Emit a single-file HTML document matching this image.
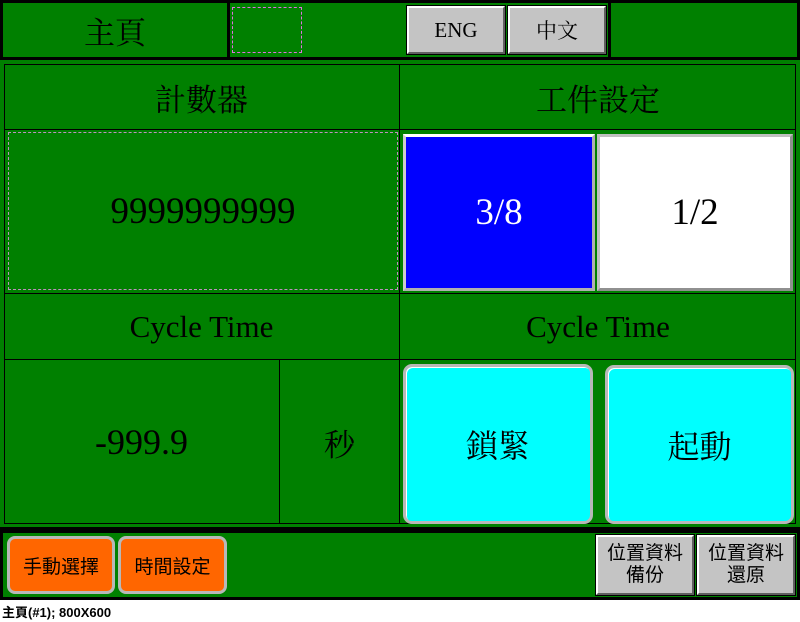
<!DOCTYPE html><html><head><style>
*{margin:0;padding:0;box-sizing:border-box}
body{width:800px;height:622px;background:#fff;position:relative;overflow:hidden;font-family:"Liberation Serif","Noto Serif CJK SC",serif}
.a{position:absolute}
.g{background:#008000}
.c{display:flex;align-items:center;justify-content:center;color:#000}
.gb{background:#c4c4c4;border:2px solid;border-color:#fff #606060 #606060 #fff;outline:1px solid #000}
.cy{background:#0ff;border:3px solid #b8b8b8;border-radius:9px;box-shadow:inset 1px 1px 0 #fff}
.or{background:#f60;border:3px solid #b8b8b8;border-radius:8px;font-family:"Liberation Sans","Noto Sans CJK SC",sans-serif;font-size:19px}
.ln{background:#000}
</style></head><body>
<div class="a" style="left:0;top:0;width:800px;height:600px;background:#000"></div>
<div class="a g c" style="left:3px;top:3px;width:224px;height:54px;font-size:31px">主頁</div>
<div class="a g" style="left:230px;top:3px;width:378px;height:54px"></div>
<div class="a" style="left:232px;top:7px;width:70px;height:46px;border:1px dashed #e070e0"></div>
<div class="a gb c" style="left:407px;top:6px;width:98px;height:48px;font-size:21px">ENG</div>
<div class="a gb c" style="left:508px;top:6px;width:98px;height:48px;font-size:21px">中文</div>
<div class="a g" style="left:611px;top:3px;width:186px;height:54px"></div>
<div class="a g" style="left:0;top:60px;width:800px;height:467px"></div>
<div class="a" style="left:4px;top:64px;width:792px;height:460px;border:1px solid #000"></div>
<div class="a ln" style="left:399px;top:64px;width:1px;height:460px"></div>
<div class="a ln" style="left:4px;top:129px;width:792px;height:1px"></div>
<div class="a ln" style="left:4px;top:293px;width:792px;height:1px"></div>
<div class="a ln" style="left:4px;top:359px;width:792px;height:1px"></div>
<div class="a ln" style="left:279px;top:359px;width:1px;height:165px"></div>
<div class="a c" style="left:4px;top:65px;width:395px;height:64px;font-size:31px">計數器</div>
<div class="a c" style="left:400px;top:65px;width:396px;height:64px;font-size:31px">工件設定</div>
<div class="a c" style="left:8px;top:132px;width:390px;height:158px;border:1px dashed #c090c0;font-size:37px">9999999999</div>
<div class="a c" style="left:403px;top:134px;width:192px;height:157px;background:#00f;border:3px solid;border-color:#fff #b0b0b0 #b0b0b0 #ccc;color:#fff;font-size:37px">3/8</div>
<div class="a c" style="left:597px;top:134px;width:196px;height:157px;background:#fff;border:3px solid;border-color:#c0c0c0 #909090 #909090 #c0c0c0;font-size:37px">1/2</div>
<div class="a c" style="left:4px;top:294px;width:395px;height:65px;font-size:31px">Cycle Time</div>
<div class="a c" style="left:400px;top:294px;width:396px;height:65px;font-size:31px">Cycle Time</div>
<div class="a c" style="left:4px;top:360px;width:275px;height:164px;font-size:36px">-999.9</div>
<div class="a c" style="left:280px;top:360px;width:119px;height:164px;font-size:31px">秒</div>
<div class="a cy c" style="left:403px;top:364px;width:190px;height:160px;font-size:32px">鎖緊</div>
<div class="a cy c" style="left:605px;top:365px;width:189px;height:159px;font-size:32px">起動</div>
<div class="a g" style="left:3px;top:533px;width:794px;height:64px"></div>
<div class="a or c" style="left:7px;top:536px;width:108px;height:58px">手動選擇</div>
<div class="a or c" style="left:118px;top:536px;width:109px;height:58px">時間設定</div>
<div class="a gb c" style="left:596px;top:535px;width:98px;height:60px;font-family:'Liberation Sans','Noto Sans CJK SC',sans-serif;font-size:19px;line-height:22px;text-align:center">位置資料<br>備份</div>
<div class="a gb c" style="left:697px;top:535px;width:98px;height:60px;font-family:'Liberation Sans','Noto Sans CJK SC',sans-serif;font-size:19px;line-height:22px;text-align:center">位置資料<br>還原</div>
<div class="a" style="left:2px;top:602px;font-family:'Liberation Sans','Noto Sans CJK SC',sans-serif;font-size:13px;font-weight:bold;color:#000">主頁(#1); 800X600</div>
</body></html>
